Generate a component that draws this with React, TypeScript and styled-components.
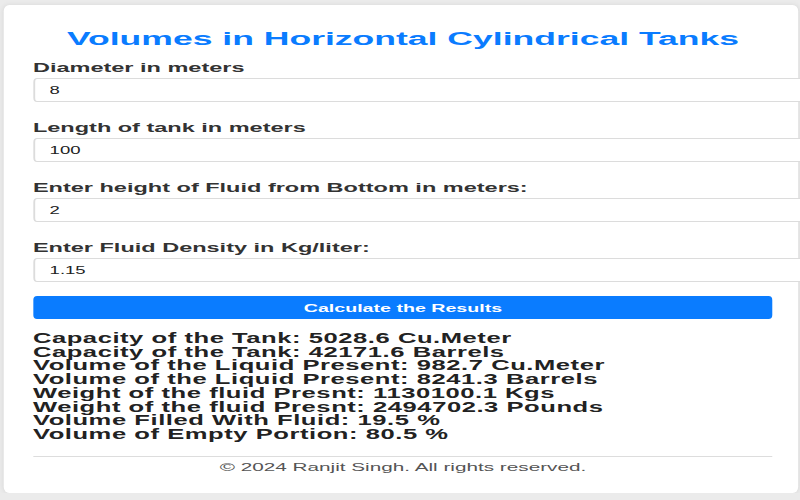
import React from "react";
import styled, { createGlobalStyle } from "styled-components";

const GlobalStyle = createGlobalStyle`
  html, body {
    margin: 0;
    padding: 0;
    overflow: hidden;
    background: #ebebeb;
    font-family: "Liberation Sans", Arial, sans-serif;
  }
`;

/* The reference is rendered horizontally stretched; the page is laid out
   at 432px and widened to fill 800px. */
const Stage = styled.div`
  width: 432px;
  box-sizing: border-box;
  padding: 5px 0 0 1.6px;
  transform: scaleX(1.852);
  transform-origin: 0 0;
`;

const Card = styled.main`
  width: 429.8px;
  box-sizing: border-box;
  background: #ffffff;
  border-radius: 3px / 6px;
  box-shadow: 0 0 4px rgba(0, 0, 0, 0.08);
  padding: 23px 14px 19px 16.2px;
`;

const Title = styled.h1`
  margin: 0 0 11px;
  font-size: 19.2px;
  line-height: 22px;
  font-weight: bold;
  color: #0a7cff;
  text-align: center;
`;

const Field = styled.div<{ $last?: boolean }>`
  margin-bottom: ${(p) => (p.$last ? "14px" : "19px")};
`;

const Label = styled.label`
  display: block;
  font-size: 12.7px;
  line-height: 15px;
  font-weight: bold;
  color: #333333;
  margin-bottom: 2px;
`;

const Input = styled.input`
  display: block;
  width: 100%;
  height: 22px;
  box-sizing: content-box;
  padding: 0 8px;
  margin: 0;
  border: 1px solid #dcdcdc;
  border-radius: 2px / 4px;
  font-family: "Liberation Sans", Arial, sans-serif;
  font-size: 10px;
  color: #222222;
  background: #ffffff;
  outline: none;
`;

const Button = styled.button`
  display: block;
  width: 100%;
  height: 23px;
  margin: 0 0 13px;
  padding: 0;
  border: none;
  border-radius: 2px / 4px;
  background: #0a7cff;
  color: #ffffff;
  font-family: "Liberation Sans", Arial, sans-serif;
  font-size: 10.6px;
  font-weight: bold;
  cursor: pointer;
`;

const Results = styled.div`
  font-size: 13.8px;
  line-height: 13.7px;
  letter-spacing: 0.3px;
  font-weight: bold;
  color: #222222;
`;

const Line = styled.div``;

const Rule = styled.hr`
  border: 0;
  border-top: 1px solid #dddddd;
  margin: 14.4px 0 4px;
`;

const Footer = styled.footer`
  text-align: center;
  font-size: 11.2px;
  line-height: 13px;
  color: #555555;
`;

const fields = [
  { label: "Diameter in meters", value: "8" },
  { label: "Length of tank in meters", value: "100" },
  { label: "Enter height of Fluid from Bottom in meters:", value: "2" },
  { label: "Enter Fluid Density in Kg/liter:", value: "1.15" },
];

const results = [
  "Capacity of the Tank: 5028.6 Cu.Meter",
  "Capacity of the Tank: 42171.6 Barrels",
  "Volume of the Liquid Present: 982.7 Cu.Meter",
  "Volume of the Liquid Present: 8241.3 Barrels",
  "Weight of the fluid Presnt: 1130100.1 Kgs",
  "Weight of the fluid Presnt: 2494702.3 Pounds",
  "Volume Filled With Fluid: 19.5 %",
  "Volume of Empty Portion: 80.5 %",
];

export default function App() {
  return (
    <>
      <GlobalStyle />
      <Stage>
        <Card>
          <Title>Volumes in Horizontal Cylindrical Tanks</Title>
          {fields.map((f, i) => (
            <Field key={f.label} $last={i === fields.length - 1}>
              <Label>{f.label}</Label>
              <Input type="text" defaultValue={f.value} />
            </Field>
          ))}
          <Button type="button">Calculate the Results</Button>
          <Results>
            {results.map((r) => (
              <Line key={r}>{r}</Line>
            ))}
          </Results>
          <Rule />
          <Footer>© 2024 Ranjit Singh. All rights reserved.</Footer>
        </Card>
      </Stage>
    </>
  );
}
